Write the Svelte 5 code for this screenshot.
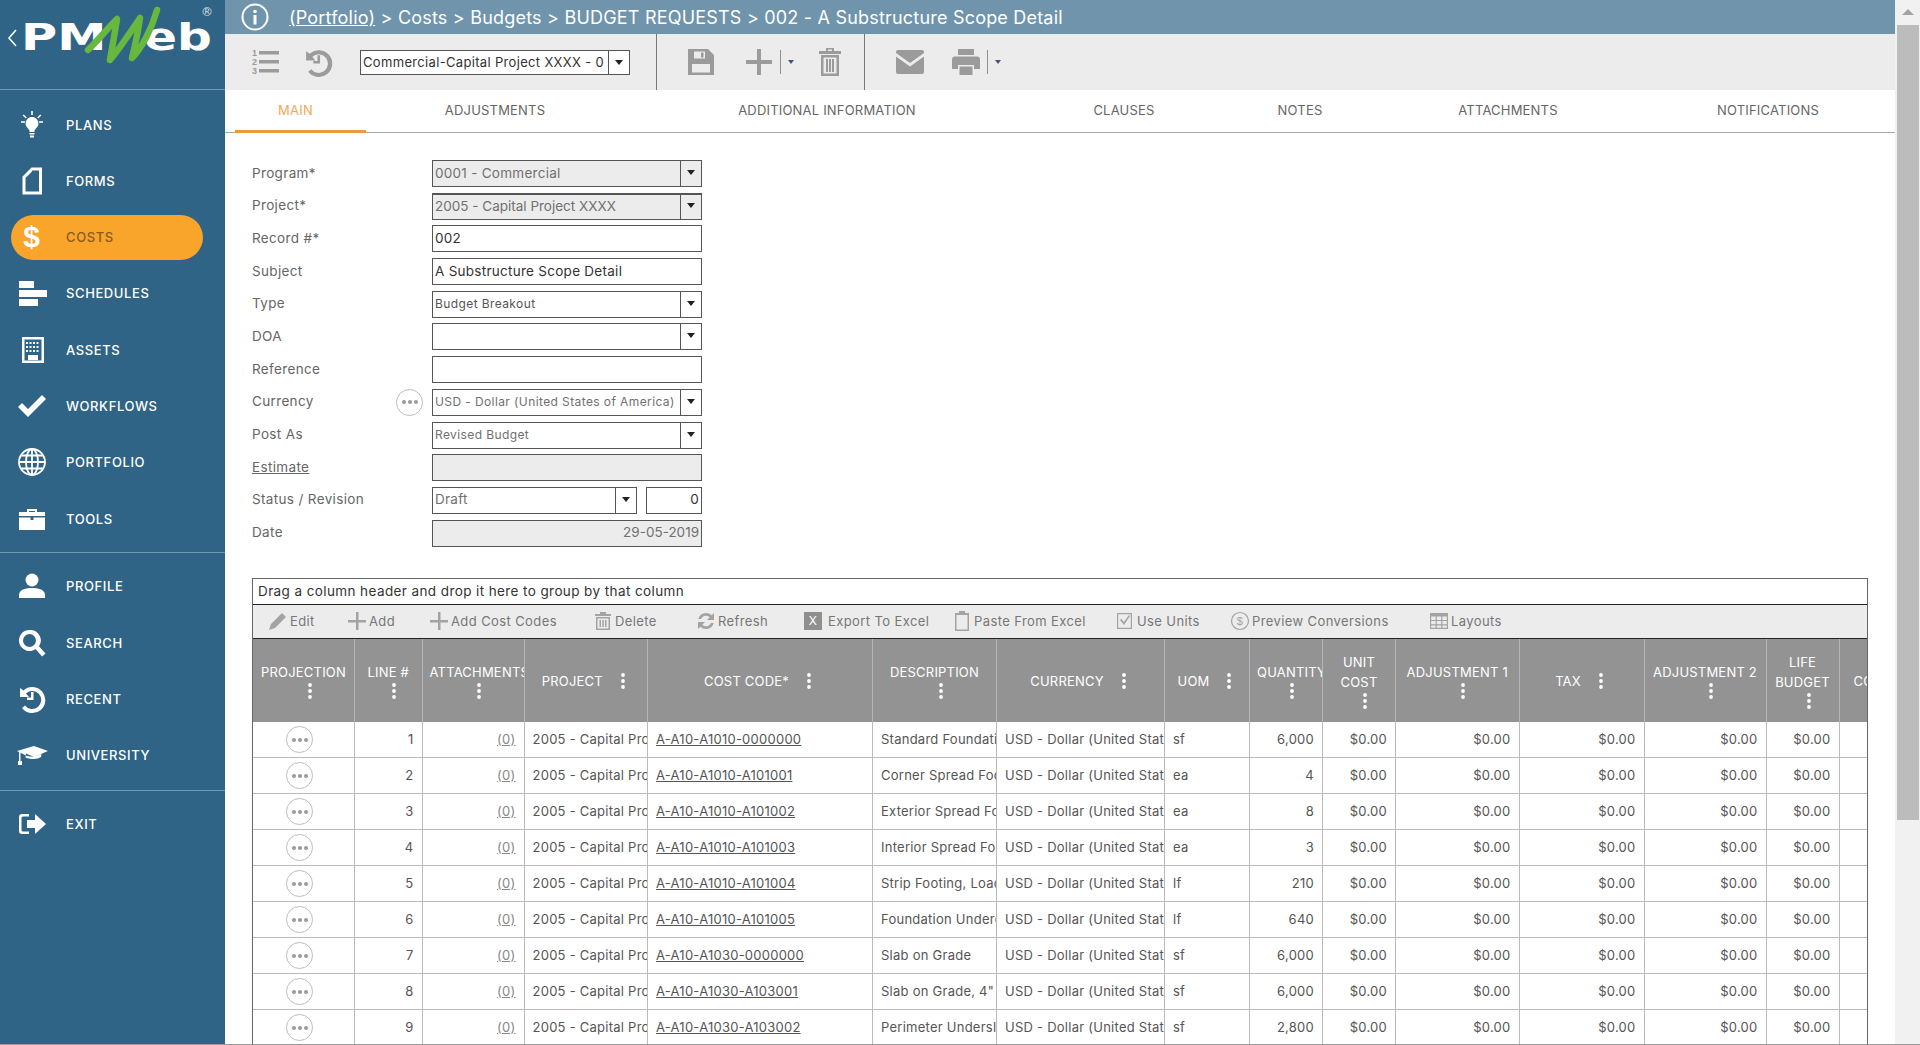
<script>
  const nav = [
    { id: 'plans', label: 'PLANS' },
    { id: 'forms', label: 'FORMS' },
    { id: 'costs', label: 'COSTS', active: true },
    { id: 'schedules', label: 'SCHEDULES' },
    { id: 'assets', label: 'ASSETS' },
    { id: 'workflows', label: 'WORKFLOWS' },
    { id: 'portfolio', label: 'PORTFOLIO' },
    { id: 'tools', label: 'TOOLS' }
  ];
  const nav2 = [
    { id: 'profile', label: 'PROFILE' },
    { id: 'search', label: 'SEARCH' },
    { id: 'recent', label: 'RECENT' },
    { id: 'university', label: 'UNIVERSITY' }
  ];

  const tabs = [
    ['MAIN', 131], ['ADJUSTMENTS', 258], ['ADDITIONAL INFORMATION', 406], ['CLAUSES', 188],
    ['NOTES', 164], ['ATTACHMENTS', 252], ['NOTIFICATIONS', 268]
  ];

  const columns = [
    { name: 'PROJECTION', w: 101.5 },
    { name: 'LINE #', w: 67.5 },
    { name: 'ATTACHMENTS', w: 102, left: true },
    { name: 'PROJECT', w: 123.5, inline: true },
    { name: 'COST CODE*', w: 225, inline: true },
    { name: 'DESCRIPTION', w: 124 },
    { name: 'CURRENCY', w: 168, inline: true },
    { name: 'UOM', w: 85, inline: true },
    { name: 'QUANTITY', w: 73, left: true },
    { name: 'UNIT COST', w: 73, wrap: true },
    { name: 'ADJUSTMENT 1', w: 123.5 },
    { name: 'TAX', w: 125, inline: true },
    { name: 'ADJUSTMENT 2', w: 122 },
    { name: 'LIFE BUDGET', w: 73, wrap: true },
    { name: 'COMMENTS', w: 80, clipped: true }
  ];

  const rows = [
    ['A-A10-A1010-0000000', 'Standard Foundations', 'sf', '6,000'],
    ['A-A10-A1010-A101001', 'Corner Spread Footings', 'ea', '4'],
    ['A-A10-A1010-A101002', 'Exterior Spread Footings', 'ea', '8'],
    ['A-A10-A1010-A101003', 'Interior Spread Footings', 'ea', '3'],
    ['A-A10-A1010-A101004', 'Strip Footing, Load', 'lf', '210'],
    ['A-A10-A1010-A101005', 'Foundation Underdrain', 'lf', '640'],
    ['A-A10-A1030-0000000', 'Slab on Grade', 'sf', '6,000'],
    ['A-A10-A1030-A103001', 'Slab on Grade, 4"', 'sf', '6,000'],
    ['A-A10-A1030-A103002', 'Perimeter Underslab', 'sf', '2,800']
  ];
</script>

{#snippet caret()}
  <svg class="caret" viewBox="0 0 8 5" width="8" height="5"><path d="M0 0h8L4 5z" /></svg>
{/snippet}

{#snippet dots()}
  <svg class="dots" viewBox="0 0 4 18" width="4" height="18"><circle cx="2" cy="3" r="1.9" /><circle cx="2" cy="9" r="1.9" /><circle cx="2" cy="15" r="1.9" /></svg>
{/snippet}

{#snippet more()}
  <span class="more"><i></i><i></i><i></i></span>
{/snippet}

{#snippet navIcon(id)}
  <svg class="nav-icon" viewBox="0 0 32 32" width="32" height="32" fill="currentColor">
    {#if id === 'plans'}
      <path d="M16 8a6.500 6.500 0 0 0-4 11.500c1.200 1 1.500 2 1.700 3.500h4.600c.2-1.500.5-2.500 1.700-3.500A6.500 6.500 0 0 0 16 8z" />
      <path d="M13.500 24h5v1.500h-5zM14 26.500h4v2h-4z" />
      <path d="M15.200 2h1.600v4h-1.600zM5 12.200h4v1.600H5zM23 12.200h4v1.600h-4zM7.800 5.500l3 3-1.100 1.100-3-3zM24.200 5.500l1.100 1.100-3 3-1.100-1.100z" />
    {:else if id === 'forms'}
      <path d="M15.500 2.500H26v27H6.500V11.500zM16 6.500 9.500 13v13.500h13.500v-21H16z" fill-rule="evenodd" />
    {:else if id === 'costs'}
      <text x="16" y="26" text-anchor="middle" class="dollar">$</text>
    {:else if id === 'schedules'}
      <path d="M3 4h15v7H3zM3 13h28v7H3zM3 22h19v7H3z" />
    {:else if id === 'assets'}
      <path d="M6 3h22v26H6zM8.500 5.500v21h17v-21z" fill-rule="evenodd" />
      <path d="M10 8h2v2h-2zM13.500 8h2v2h-2zM17 8h2v2h-2zM20.500 8h2v2h-2zM10 12h2v2h-2zM13.500 12h2v2h-2zM17 12h2v2h-2zM20.500 12h2v2h-2zM10 16h2v2h-2zM13.500 16h2v2h-2zM17 16h2v2h-2zM20.500 16h2v2h-2zM12 21h10v5H12z" />
    {:else if id === 'workflows'}
      <path d="M2 17l4-4 6 6L26 5l4 4-18 18z" />
    {:else if id === 'portfolio'}
      <g fill="none" stroke="currentColor" stroke-width="1.800">
        <circle cx="16" cy="16" r="13" />
        <ellipse cx="16" cy="16" rx="6" ry="13" />
        <path d="M16 3v26M3 16h26M5 9.500h22M5 22.500h22" />
      </g>
    {:else if id === 'tools'}
      <path d="M11 6h10v3h3v4H3v-4h8zM13 8v1h6V8zM3 14.500h11.500V17h3v-2.500H29V27H3zM24 9h5v4h-5z" fill-rule="evenodd" />
    {:else if id === 'profile'}
      <circle cx="16" cy="10" r="6.500" /><path d="M3 28v-3c0-4.500 5-7 13-7s13 2.500 13 7v3z" />
    {:else if id === 'search'}
      <path d="M13.500 3a10.500 10.500 0 1 0 6 19.100L26 29.500l3.500-3-6.500-7.200A10.500 10.500 0 0 0 13.500 3zm0 4a6.500 6.500 0 1 1 0 13 6.500 6.500 0 0 1 0-13z" fill-rule="evenodd" />
    {:else if id === 'recent'}
      <path d="M4 5v9h9l-3-3.500A9 9 0 1 1 9 22.500l-3 2.500A13 13 0 1 0 7.500 7.500z" />
      <path d="M15 9h2.500v8H11v-2.500h4z" />
    {:else if id === 'university'}
      <path d="M1 12l17-5 14 5-14 6-8-3.500-.5 4c3 1 6 1.500 8.500 1.500s5-1 7-2l.5-3-7.500 3-7-1v0z" />
      <path d="M3 13h1.500v9H6v4H2v-4h1z" />
    {:else if id === 'exit'}
      <path d="M13 6H6a3 3 0 0 0-3 3v14a3 3 0 0 0 3 3h7v-2.500H7a1.500 1.500 0 0 1-1.500-1.500V10A1.500 1.500 0 0 1 7 8.500h6z" />
      <path d="M11 12h8V6l11 10-11 10v-6h-8z" />
    {/if}
  </svg>
{/snippet}

<div class="page">
  <aside class="sidebar">
    <div class="logo">
      <svg class="logo-back" viewBox="0 0 10 18" width="10" height="18"><path d="M9 1 2 9l7 8" fill="none" stroke="#fff" stroke-width="1.600" /></svg>
      <span class="logo-pm">PM</span>
      <span class="logo-eb">eb</span>
      <svg class="logo-w" viewBox="0 0 225 90" width="225" height="90">
        <path d="M88 50 C98 40 108 28 117 19 C115 32 112 48 110 60 C120 48 132 30 140 18 C138 32 135 46 132 58 C142 48 152 28 157 10" fill="none" stroke="#68b83f" stroke-width="6.500" stroke-linejoin="round" stroke-linecap="round" />
      </svg>
      <span class="logo-reg">®</span>
    </div>

    <nav class="nav-group one">
      {#each nav as item}
        <div class="nav-item" class:active={item.active}>
          {@render navIcon(item.id)}
          <span>{item.label}</span>
        </div>
      {/each}
    </nav>
    <nav class="nav-group two">
      {#each nav2 as item}
        <div class="nav-item">
          {@render navIcon(item.id)}
          <span>{item.label}</span>
        </div>
      {/each}
    </nav>
    <nav class="nav-group last">
      <div class="nav-item">
        {@render navIcon('exit')}
        <span>EXIT</span>
      </div>
    </nav>
  </aside>

  <main class="main">
    <header class="crumbs">
      <svg class="info" viewBox="0 0 28 28" width="28" height="28">
        <circle cx="14" cy="14" r="12.500" fill="none" stroke="#fff" stroke-width="2" />
        <circle cx="14" cy="8.500" r="1.800" fill="#fff" />
        <rect x="12.500" y="12" width="3" height="9.500" fill="#fff" />
      </svg>
      <span><u>(Portfolio)</u> &gt; Costs &gt; Budgets &gt; BUDGET REQUESTS &gt; 002 - A Substructure Scope Detail</span>
    </header>

    <div class="toolbar">
      <div class="tool-group first">
        <svg class="tool" viewBox="0 0 28 28" width="28" height="28">
          <path d="M7 3h20v3.500H7zM7 12h20v3.500H7zM7 21h20v3.500H7z" />
          <text x="0" y="8" class="num">1</text><text x="0" y="17" class="num">2</text><text x="0" y="26" class="num">3</text>
        </svg>
        <svg class="tool history" viewBox="0 0 32 32" width="33" height="33">
          <path d="M4 5v9h9l-3-3.500A9 9 0 1 1 9 22.500l-3 2.500A13 13 0 1 0 7.500 7.500z" />
          <path d="M15 9h2.500v8H11v-2.500h4z" />
        </svg>
        <div class="combo top-combo">
          <span class="value">Commercial-Capital Project XXXX - 0</span>
          <span class="drop">{@render caret()}</span>
        </div>
      </div>
      <div class="tool-group second">
        <svg class="tool" viewBox="0 0 28 28" width="28" height="28">
          <path fill-rule="evenodd" d="M1 1h20l6 6v20H1zM7 3.500v7h11v-7zM14 4.500h2.500V9.500H14zM5 16v8.500h18V16z" />
        </svg>
        <svg class="tool" viewBox="0 0 28 28" width="28" height="28"><path d="M12 1h4v11h11v4H16v11h-4V16H1v-4h11z" /></svg>
        <span class="split"></span>
        <svg class="small-caret" viewBox="0 0 6 4" width="6" height="4"><path d="M0 0h6L3 4z" /></svg>
        <svg class="tool trash" viewBox="0 0 24 28" width="24" height="28">
          <path fill-rule="evenodd" d="M8 0h8v3h7v3H1V3h7zM10 1.500V3h4V1.500zM3 7h18v21H3zM5.500 9.500v16h13v-16z" />
          <path d="M8 11h2v13H8zM11 11h2v13h-2zM14 11h2v13h-2z" />
        </svg>
      </div>
      <div class="tool-group third">
        <svg class="tool" viewBox="0 0 28 24" width="28" height="24">
          <path d="M2 0h24a2 2 0 0 1 2 2v1L14 13 0 3V2a2 2 0 0 1 2-2zM0 6.500l14 10 14-10V22a2 2 0 0 1-2 2H2a2 2 0 0 1-2-2z" />
        </svg>
        <svg class="tool printer" viewBox="0 0 28 28" width="28" height="28">
          <path fill-rule="evenodd" d="M6 1h16v6H6zM3 8.500h22a3 3 0 0 1 3 3V21h-6v-4H6v4H0v-9.500a3 3 0 0 1 3-3zM7.500 18.500h13V27h-13z" />
        </svg>
        <span class="split"></span>
        <svg class="small-caret" viewBox="0 0 6 4" width="6" height="4"><path d="M0 0h6L3 4z" /></svg>
      </div>
    </div>

    <div class="tabs">
      {#each tabs as [label, w], i}
        <div class="tab" class:selected={i === 0} style="width: {w}px">{label}</div>
      {/each}
    </div>

    <section class="form">
      <div class="form-row">
        <label for="program">Program*</label>
        <div class="combo readonly"><span class="value muted" id="program">0001 - Commercial</span><span class="drop">{@render caret()}</span></div>
      </div>
      <div class="form-row project-row">
        <label for="project">Project*</label>
        <div class="combo readonly"><span class="value muted tight" id="project">2005 - Capital Project XXXX</span><span class="drop">{@render caret()}</span></div>
      </div>
      <div class="form-row">
        <label for="record">Record #*</label>
        <div class="combo"><span class="value" id="record">002</span></div>
      </div>
      <div class="form-row">
        <label for="subject">Subject</label>
        <div class="combo"><span class="value" id="subject">A Substructure Scope Detail</span></div>
      </div>
      <div class="form-row">
        <label for="type">Type</label>
        <div class="combo"><span class="value small" id="type">Budget Breakout</span><span class="drop">{@render caret()}</span></div>
      </div>
      <div class="form-row">
        <label for="doa">DOA</label>
        <div class="combo"><span class="value" id="doa"></span><span class="drop">{@render caret()}</span></div>
      </div>
      <div class="form-row">
        <label for="reference">Reference</label>
        <div class="combo"><span class="value" id="reference"></span></div>
      </div>
      <div class="form-row">
        <label for="currency">Currency</label>
        {@render more()}
        <div class="combo"><span class="value small muted" id="currency">USD - Dollar (United States of America)</span><span class="drop">{@render caret()}</span></div>
      </div>
      <div class="form-row">
        <label for="post">Post As</label>
        <div class="combo"><span class="value small muted" id="post">Revised Budget</span><span class="drop">{@render caret()}</span></div>
      </div>
      <div class="form-row">
        <label for="estimate"><u>Estimate</u></label>
        <div class="combo readonly"><span class="value" id="estimate"></span></div>
      </div>
      <div class="form-row">
        <label for="status">Status / Revision</label>
        <div class="pair">
          <div class="combo"><span class="value muted" id="status">Draft</span><span class="drop">{@render caret()}</span></div>
          <div class="combo revision"><span class="value right">0</span></div>
        </div>
      </div>
      <div class="form-row">
        <label for="date">Date</label>
        <div class="combo readonly"><span class="value muted tight right" id="date">29-05-2019</span></div>
      </div>
    </section>

    <section class="grid">
      <div class="group-bar">Drag a column header and drop it here to group by that column</div>
      <div class="grid-tools">
        <span class="gt" style="width: 79px">
          <svg viewBox="0 0 20 20" width="20" height="20"><path d="M1 19l2-6L14 2l4 4L7 17z" /></svg>Edit
        </span>
        <span class="gt" style="width: 82px">
          <svg viewBox="0 0 20 20" width="20" height="20"><path d="M9 1h2.500v8H19v2.500h-7.500V19H9v-7.500H1V9h8z" /></svg>Add
        </span>
        <span class="gt" style="width: 164px">
          <svg viewBox="0 0 20 20" width="20" height="20"><path d="M9 1h2.500v8H19v2.500h-7.500V19H9v-7.500H1V9h8z" /></svg>Add Cost Codes
        </span>
        <span class="gt" style="width: 103px">
          <svg viewBox="0 0 20 20" width="20" height="20"><path fill-rule="evenodd" d="M7 1h6v2h5v2H2V3h5zM3 6h14v13H3zM4.500 7.500v10h11v-10zM6.500 9h1.500v7H6.500zM9.300 9h1.500v7H9.300zM12 9h1.500v7H12z" /></svg>Delete
        </span>
        <span class="gt" style="width: 108px">
          <svg viewBox="0 0 20 20" width="20" height="20"><path d="M10 2a8 8 0 0 1 5.700 2.300L18 2v7h-7l2.700-2.700A5.200 5.200 0 0 0 5.100 8H2.300A8 8 0 0 1 10 2zM2 11h7l-2.700 2.700A5.200 5.200 0 0 0 14.900 12h2.800A8 8 0 0 1 4.300 15.700L2 18z" /></svg>Refresh
        </span>
        <span class="gt" style="width: 148px">
          <span class="xls">X</span>Export To Excel
        </span>
        <span class="gt" style="width: 163px">
          <svg viewBox="0 0 20 20" width="20" height="20"><path fill-rule="evenodd" d="M7 0h6v2h4v18H3V2h4zM4.500 4v14.500h11V4z" /></svg>Paste From Excel
        </span>
        <span class="gt" style="width: 115px">
          <svg viewBox="0 0 20 20" width="20" height="20"><path fill-rule="evenodd" d="M2 2h15v16H2zM3.200 3.200v13.600h12.600V3.200z" /><path d="M5 9l1.200-1.200L9 11l5-7 1 1-6 9z" /></svg>Use Units
        </span>
        <span class="gt" style="width: 199px">
          <svg viewBox="0 0 20 20" width="20" height="20"><circle cx="10" cy="10" r="8.500" fill="none" stroke="#a3a3a3" stroke-width="1.200" /><text x="10" y="13.500" text-anchor="middle" class="coin">$</text></svg>Preview Conversions
        </span>
        <span class="gt layouts">
          <svg viewBox="0 0 20 20" width="20" height="20"><path fill-rule="evenodd" d="M1 2h18v16H1zM2.200 5.500v3.400h4.400V5.500zM7.800 5.500v3.400h4.400V5.500zM13.400 5.500v3.400h4.400V5.500zM2.200 10.100v3.200h4.400v-3.200zM7.800 10.100v3.200h4.400v-3.200zM13.400 10.100v3.200h4.400v-3.200zM2.200 14.500v2.300h4.400v-2.300zM7.800 14.500v2.300h4.400v-2.300zM13.400 14.500v2.300h4.400v-2.300z" /></svg>Layouts
        </span>
      </div>
      <div class="table-wrap">
        <table>
          <colgroup>
            {#each columns as col}<col style="width: {col.w}px" />{/each}
          </colgroup>
          <thead>
            <tr>
              {#each columns as col}
                <th class:clip={col.clipped}>
                  <div class="th" class:inline={col.inline} class:left={col.left}>
                    <span class="th-label" class:wrap={col.wrap}>{col.name}</span>
                    {#if !col.clipped}{@render dots()}{/if}
                  </div>
                </th>
              {/each}
            </tr>
          </thead>
          <tbody>
            {#each rows as row, i}
              <tr>
                <td class="center">{@render more()}</td>
                <td class="num-cell">{i + 1}</td>
                <td class="num-cell"><u class="attach">(0)</u></td>
                <td><div class="cut">2005 - Capital Project XXXX</div></td>
                <td><u>{row[0]}</u></td>
                <td><div class="cut">{row[1]}</div></td>
                <td><div class="cut">USD - Dollar (United States of America)</div></td>
                <td>{row[2]}</td>
                <td class="num-cell">{row[3]}</td>
                <td class="num-cell">$0.00</td>
                <td class="num-cell">$0.00</td>
                <td class="num-cell">$0.00</td>
                <td class="num-cell">$0.00</td>
                <td class="num-cell">$0.00</td>
                <td></td>
              </tr>
            {/each}
          </tbody>
        </table>
      </div>
    </section>
  </main>

  <div class="scrollbar">
    <div class="arrow"></div>
    <div class="thumb"></div>
  </div>
</div>

<style>
  :global(body) {
    margin: 0;
    background: #fff;
    overflow: hidden;
  }

  .page {
    display: flex;
    height: 1045px;
    box-sizing: border-box;
    border-bottom: 1px solid #999;
    overflow: hidden;
    font-family: 'Inter', 'Open Sans', sans-serif;
    color: #555;
  }

  /* sidebar */
  .sidebar {
    width: 225px;
    flex: none;
    background: #2f6486;
    color: #fff;
  }

  .logo {
    height: 90px;
    box-sizing: border-box;
    border-bottom: 1px solid #6f9bb6;
    position: relative;
    font-family: 'DejaVu Sans', sans-serif;
    font-weight: 700;
    font-size: 38px;
    line-height: 1;
    color: #fff;
  }

  .logo-back {
    position: absolute;
    left: 7px;
    top: 29px;
  }

  .logo-pm {
    position: absolute;
    left: 21px;
    top: 18px;
    transform: scaleX(1.3);
    transform-origin: left;
  }

  .logo-w {
    position: absolute;
    left: 0;
    top: 0;
  }

  .logo-eb {
    position: absolute;
    left: 144px;
    top: 18px;
    transform: scaleX(1.28);
    transform-origin: left;
  }

  .logo-reg {
    position: absolute;
    left: 201px;
    top: 6px;
    font-size: 12px;
    font-weight: 400;
    opacity: 0.8;
  }

  .nav-group {
    border-bottom: 1px solid #6f9bb6;
  }

  .nav-group.one {
    padding: 12px 0 0;
  }

  .nav-group.two {
    padding: 10.500px 0 0.500px;
  }

  .nav-group.last {
    border-bottom: none;
    padding-top: 11px;
  }

  .nav-item {
    height: 45px;
    margin: 0 22px 11.300px 11px;
    display: flex;
    align-items: center;
    border-radius: 23px;
    font-size: 13px;
    letter-spacing: 0.6px;
    font-weight: 500;
  }

  .nav-item.active {
    background: #f9a52c;
    color: #8a5a1e;
  }

  .nav-item.active .nav-icon {
    color: #fff;
  }

  .nav-icon {
    flex: none;
    margin: 0 18px 0 5px;
  }

  .dollar {
    font-family: 'Liberation Sans', sans-serif;
    font-size: 30px;
    font-weight: 700;
  }

  /* breadcrumbs */
  .main {
    flex: 1;
    min-width: 0;
    display: flex;
    flex-direction: column;
  }

  .crumbs {
    height: 34px;
    flex: none;
    background: #6f94ab;
    color: #fff;
    display: flex;
    align-items: center;
    gap: 20px;
    padding-left: 16px;
    font-size: 18px;
    letter-spacing: 0.2px;
    white-space: nowrap;
  }

  .toolbar {
    height: 56px;
    flex: none;
    background: #ececec;
    display: flex;
  }

  .tool-group {
    display: flex;
    align-items: center;
    box-sizing: border-box;
  }

  .tool-group.first {
    width: 432px;
    padding-left: 27px;
    border-right: 1px solid #777;
  }

  .tool-group.second {
    width: 208px;
    padding-left: 30px;
    border-right: 1px solid #777;
  }

  .tool-group.third {
    padding-left: 31px;
  }

  .tool {
    fill: #9b9b9b;
    flex: none;
  }

  .tool.history {
    margin-left: 22px;
  }

  .num {
    font-family: 'Liberation Sans', sans-serif;
    font-size: 9px;
    font-weight: 700;
  }

  .second > svg:nth-child(2) {
    margin-left: 30px;
  }

  .trash {
    margin-left: 24px;
  }

  .printer {
    margin-left: 28px;
  }

  .split {
    width: 1px;
    height: 24px;
    margin: 0 7px;
    background: #8f8f8f;
  }

  .small-caret {
    fill: #44557a;
  }

  .combo.top-combo {
    flex: none;
    width: 270px;
    height: 25px;
    margin-left: 25px;
    background: #fff;
  }

  .top-combo .value {
    padding-bottom: 0;
    font-size: 13px;
    letter-spacing: 0.33px;
  }

  .top-combo .drop {
    padding-bottom: 0;
  }

  /* tabs */
  .tabs {
    height: 43px;
    flex: none;
    box-sizing: border-box;
    display: flex;
    border-bottom: 1px solid #a8a8a8;
    padding-left: 10px;
  }

  .tab {
    flex: none;
    box-sizing: border-box;
    height: 43px;
    line-height: 41px;
    text-align: center;
    font-size: 13px;
    letter-spacing: 0.2px;
    color: #666;
  }

  .tab.selected {
    color: #f0a95a;
    border-bottom: 3px solid #f0963c;
    padding-right: 10px;
  }

  /* form */
  .form {
    padding: 27px 0 0 27px;
    height: 445px;
    box-sizing: border-box;
    flex: none;
  }

  .form-row {
    display: flex;
    align-items: center;
    height: 27px;
    margin-bottom: 5.700px;
    width: 450px;
    position: relative;
  }

  .form-row label {
    width: 180px;
    flex: none;
    padding-bottom: 2px;
    font-size: 13.500px;
    letter-spacing: 0.35px;
    color: #666;
  }

  .form-row .more {
    position: absolute;
    left: 144px;
    top: 0;
  }

  .project-row .combo {
    border-top-width: 2px;
  }

  .combo {
    flex: 1;
    box-sizing: border-box;
    height: 27px;
    border: 1px solid #555;
    display: flex;
    align-items: center;
    min-width: 0;
    color: #333;
  }

  .combo.readonly {
    background: #ececec;
  }

  .value {
    flex: 1;
    min-width: 0;
    padding: 0 2px 2px;
    font-size: 13.500px;
    letter-spacing: 0.27px;
    white-space: nowrap;
    overflow: hidden;
  }

  .value.small {
    font-size: 12px;
    letter-spacing: 0.4px;
    color: #555;
  }

  .value.muted {
    color: #707070;
  }

  .value.tight {
    letter-spacing: 0;
  }

  .value.right {
    text-align: right;
  }

  .drop {
    flex: none;
    width: 21px;
    height: 100%;
    box-sizing: border-box;
    padding-bottom: 2px;
    border-left: 1px solid #555;
    display: flex;
    align-items: center;
    justify-content: center;
  }

  .caret {
    fill: #222;
  }

  .pair {
    flex: 1;
    display: flex;
    gap: 9px;
  }

  .combo.revision {
    flex: none;
    width: 56px;
  }

  .more {
    width: 27px;
    height: 27px;
    box-sizing: border-box;
    border: 1.500px solid #bdbdbd;
    border-radius: 50%;
    background: #fff;
    display: inline-flex;
    align-items: center;
    justify-content: center;
    gap: 2px;
  }

  .more i {
    width: 4px;
    height: 4px;
    border-radius: 50%;
    background: #9a9a9a;
  }

  /* grid */
  .grid {
    margin: 0 0 0 27px;
    width: 1616px;
    box-sizing: border-box;
    border: 1px solid #666;
    border-bottom: none;
    flex: 1;
    min-height: 0;
    display: flex;
    flex-direction: column;
  }

  .group-bar {
    height: 25px;
    flex: none;
    line-height: 25px;
    padding-left: 5px;
    border-bottom: 1px solid #222;
    font-size: 13.500px;
    letter-spacing: 0.4px;
    color: #333;
  }

  .grid-tools {
    height: 33px;
    flex: none;
    background: #ececec;
    border-bottom: 1px solid #222;
    display: flex;
    align-items: center;
    padding-left: 15px;
    font-size: 13px;
    letter-spacing: 0.4px;
    color: #777;
  }

  .gt {
    flex: none;
    display: flex;
    align-items: center;
    gap: 2px;
    white-space: nowrap;
    padding-bottom: 2px;
  }

  .gt svg {
    fill: #a3a3a3;
    flex: none;
  }

  .coin {
    font-family: 'Liberation Sans', sans-serif;
    font-size: 11px;
  }

  .xls {
    width: 18px;
    height: 18px;
    margin-right: 4px;
    background: #8f8f8f;
    color: #fff;
    font-size: 12px;
    text-align: center;
    line-height: 18px;
  }

  .table-wrap {
    flex: 1;
    min-height: 0;
    overflow: hidden;
  }

  table {
    table-layout: fixed;
    border-collapse: collapse;
    width: 1666px;
  }

  th {
    height: 83px;
    padding: 0;
    background: #939393;
    border-right: 1px solid #b5b5b5;
    color: #fff;
    font-size: 13px;
    font-weight: 400;
    letter-spacing: 0.2px;
    overflow: hidden;
  }

  .th {
    display: flex;
    flex-direction: column;
    align-items: center;
    justify-content: center;
    line-height: 20px;
    overflow: hidden;
  }

  .th .dots {
    margin-left: 12px;
  }

  .th.inline {
    flex-direction: row;
    gap: 18px;
    padding-right: 5px;
  }

  .th.inline .dots {
    margin-left: 0;
  }

  .th.left .th-label {
    align-self: flex-start;
    padding-left: 7px;
  }

  .th-label {
    white-space: nowrap;
    text-align: center;
  }

  .th-label.wrap {
    white-space: normal;
  }

  th.clip .th {
    align-items: flex-start;
    padding-left: 14px;
  }

  .dots {
    fill: #fff;
    flex: none;
  }

  td {
    height: 33px;
    padding: 0 8px 2px;
    border-right: 1px solid #bbb;
    border-bottom: 1px solid #bbb;
    font-size: 13px;
    letter-spacing: 0.25px;
    color: #555;
    white-space: nowrap;
    overflow: hidden;
  }

  td.center {
    text-align: center;
    padding: 0 16px 0 8px;
    height: 35px;
  }

  td.center .more {
    vertical-align: middle;
  }

  td.num-cell {
    text-align: right;
  }

  .attach {
    color: #888;
  }

  .cut {
    overflow: hidden;
    white-space: nowrap;
    margin-right: -8px;
  }

  /* fake page scrollbar */
  .scrollbar {
    width: 25px;
    flex: none;
    background: #f1f1f1;
    display: flex;
    flex-direction: column;
    align-items: center;
  }

  .arrow {
    margin-top: 9px;
    width: 0;
    height: 0;
    border-left: 6px solid transparent;
    border-right: 6px solid transparent;
    border-bottom: 6px solid #a3a3a3;
  }

  .thumb {
    margin-top: 10px;
    width: 22px;
    height: 795px;
    background: #bcbcbc;
  }
</style>
